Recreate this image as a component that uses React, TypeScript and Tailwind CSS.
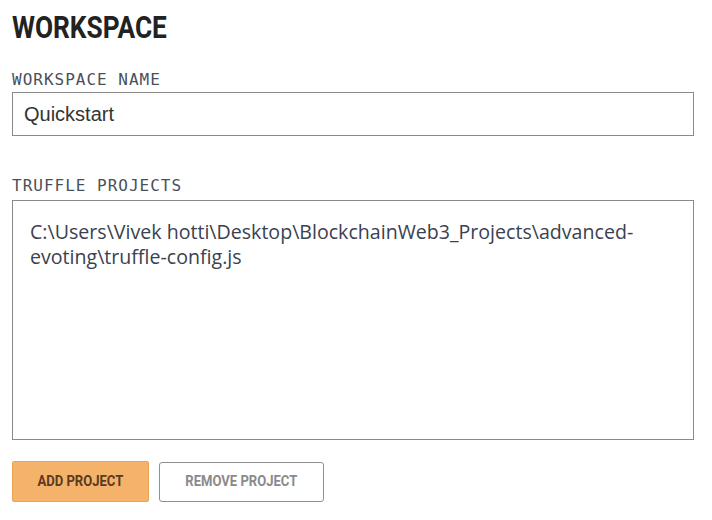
import React from "react";

export default function App() {
    return (
        <main className="bg-white min-h-screen w-[712px] h-[520px] overflow-hidden px-3 pt-[8px]">
            {/* condensed look: Roboto squeezed, no condensed face installed */}
            <h1 className="font-['Roboto','Liberation_Sans',sans-serif] text-[32px] leading-[38px] font-bold text-[#222222] origin-left scale-x-[0.82]">
                WORKSPACE
            </h1>

            <label className="block mt-[24px] font-['DejaVu_Sans_Mono','Liberation_Mono',monospace] text-[16px] leading-[20px] text-[#4a4f5a] tracking-[1px]">
                WORKSPACE NAME
            </label>
            <div className="mt-[2px] w-[682px] h-[44px] border border-[#8a8a8a] flex items-center px-[11px] font-['Liberation_Sans',Arial,sans-serif] text-[20px] text-[#333333]">
                Quickstart
            </div>

            <label className="block mt-[40px] font-['DejaVu_Sans_Mono','Liberation_Mono',monospace] text-[16px] leading-[20px] text-[#4a4f5a] tracking-[1px]">
                TRUFFLE PROJECTS
            </label>
            <div className="mt-[4px] w-[682px] h-[240px] border border-[#8a8a8a] pl-[17px] pr-[40px] pt-[18px] font-['Open_Sans','Noto_Sans',sans-serif] text-[19.6px] leading-[25px] text-[#3a4150]">
                C:\Users\Vivek hotti\Desktop\BlockchainWeb3_Projects\advanced-evoting\truffle-config.js
            </div>

            <div className="mt-[21px] flex gap-[10px] items-center font-['Roboto','Liberation_Sans',sans-serif]">
                <button className="w-[137px] h-[41px] bg-[#f4b26b] border border-[#e9a455] rounded-[2px] text-[15px] font-bold text-[#5b3a1f] flex items-center justify-center">
                    <span className="inline-block scale-x-[0.87]">ADD PROJECT</span>
                </button>
                <button className="w-[165px] h-[40px] bg-white border border-[#8f8f8f] rounded-[3px] text-[15px] font-bold text-[#8a8a8a] flex items-center justify-center">
                    <span className="inline-block scale-x-[0.87]">REMOVE PROJECT</span>
                </button>
            </div>
        </main>
    );
}
